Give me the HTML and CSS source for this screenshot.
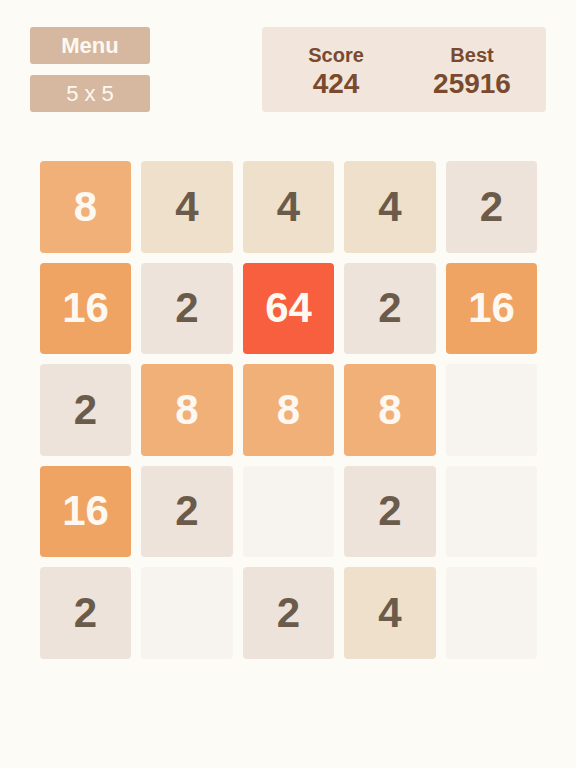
FILE: index.html
```html
<!DOCTYPE html>
<html lang="en">
<head>
  <meta charset="UTF-8" />
  <meta name="viewport" content="width=device-width, initial-scale=1.0"/>
  <title>2048 5x5</title>
  <link rel="stylesheet" href="styles.css">
</head>
<body>
  <div class="header">
    <div class="controls">
      <button class="btn menu">Menu</button>
      <button class="btn size">5 x 5</button>
    </div>
    <div class="scores">
      <div class="score-box">
        <div class="label">Score</div>
        <div class="value">424</div>
      </div>
      <div class="score-box">
        <div class="label">Best</div>
        <div class="value">25916</div>
      </div>
    </div>
  </div>

  <div class="board">
    <div class="tile t8">8</div>
    <div class="tile t4">4</div>
    <div class="tile t4">4</div>
    <div class="tile t4">4</div>
    <div class="tile t2">2</div>

    <div class="tile t16">16</div>
    <div class="tile t2">2</div>
    <div class="tile t64">64</div>
    <div class="tile t2">2</div>
    <div class="tile t16">16</div>

    <div class="tile t2">2</div>
    <div class="tile t8">8</div>
    <div class="tile t8">8</div>
    <div class="tile t8">8</div>
    <div class="tile empty"></div>

    <div class="tile t16">16</div>
    <div class="tile t2">2</div>
    <div class="tile empty"></div>
    <div class="tile t2">2</div>
    <div class="tile empty"></div>

    <div class="tile t2">2</div>
    <div class="tile empty"></div>
    <div class="tile t2">2</div>
    <div class="tile t4">4</div>
    <div class="tile empty"></div>
  </div>
</body>
</html>
```

FILE: styles.css
```css
body {
  font-family: 'Liberation Sans', Arial, sans-serif;
  margin: 0;
  background-color: #fdfbf6;
  color: #6b5b4b;
}
.header {
  display: flex;
  justify-content: space-between;
  padding: 27px 30px 0 30px;
}
.controls {
  display: flex;
  flex-direction: column;
  gap: 11px;
  width: 120px;
}
.btn {
  height: 37px;
  border: none;
  border-radius: 3px;
  background: #d5b89f;
  color: #fdf8f1;
  font-family: inherit;
  font-size: 22px;
  padding: 0;
}
.menu {
  font-weight: bold;
}
.scores {
  display: flex;
  justify-content: center;
  align-items: center;
  width: 284px;
  height: 85px;
  box-sizing: border-box;
  padding-top: 4px;
  background: #f2e6dc;
  border-radius: 4px;
}
.score-box {
  width: 136px;
  text-align: center;
  color: #7a4a2f;
  font-weight: bold;
}
.label {
  font-size: 20px;
  line-height: 22px;
}
.value {
  font-size: 28px;
  line-height: 32px;
  margin-top: 2px;
}
.board {
  display: grid;
  grid-template-columns: repeat(5, 91.5px);
  grid-auto-rows: 91.5px;
  gap: 10px;
  justify-content: center;
  margin-top: 49px;
  padding-left: 1px;
}
.tile {
  display: flex;
  align-items: center;
  justify-content: center;
  border-radius: 4px;
  font-size: 42px;
  font-weight: bold;
  color: #6b5b4b;
}
.empty { background: #f7f4ef; }
.t2 { background: #ede3da; }
.t4 { background: #eee0ca; }
.t8 { background: #f2b079; color: #fdf8f1; }
.t16 { background: #f0a463; color: #fdf8f1; }
.t64 { background: #f75f3e; color: #fdf8f1; }
```
